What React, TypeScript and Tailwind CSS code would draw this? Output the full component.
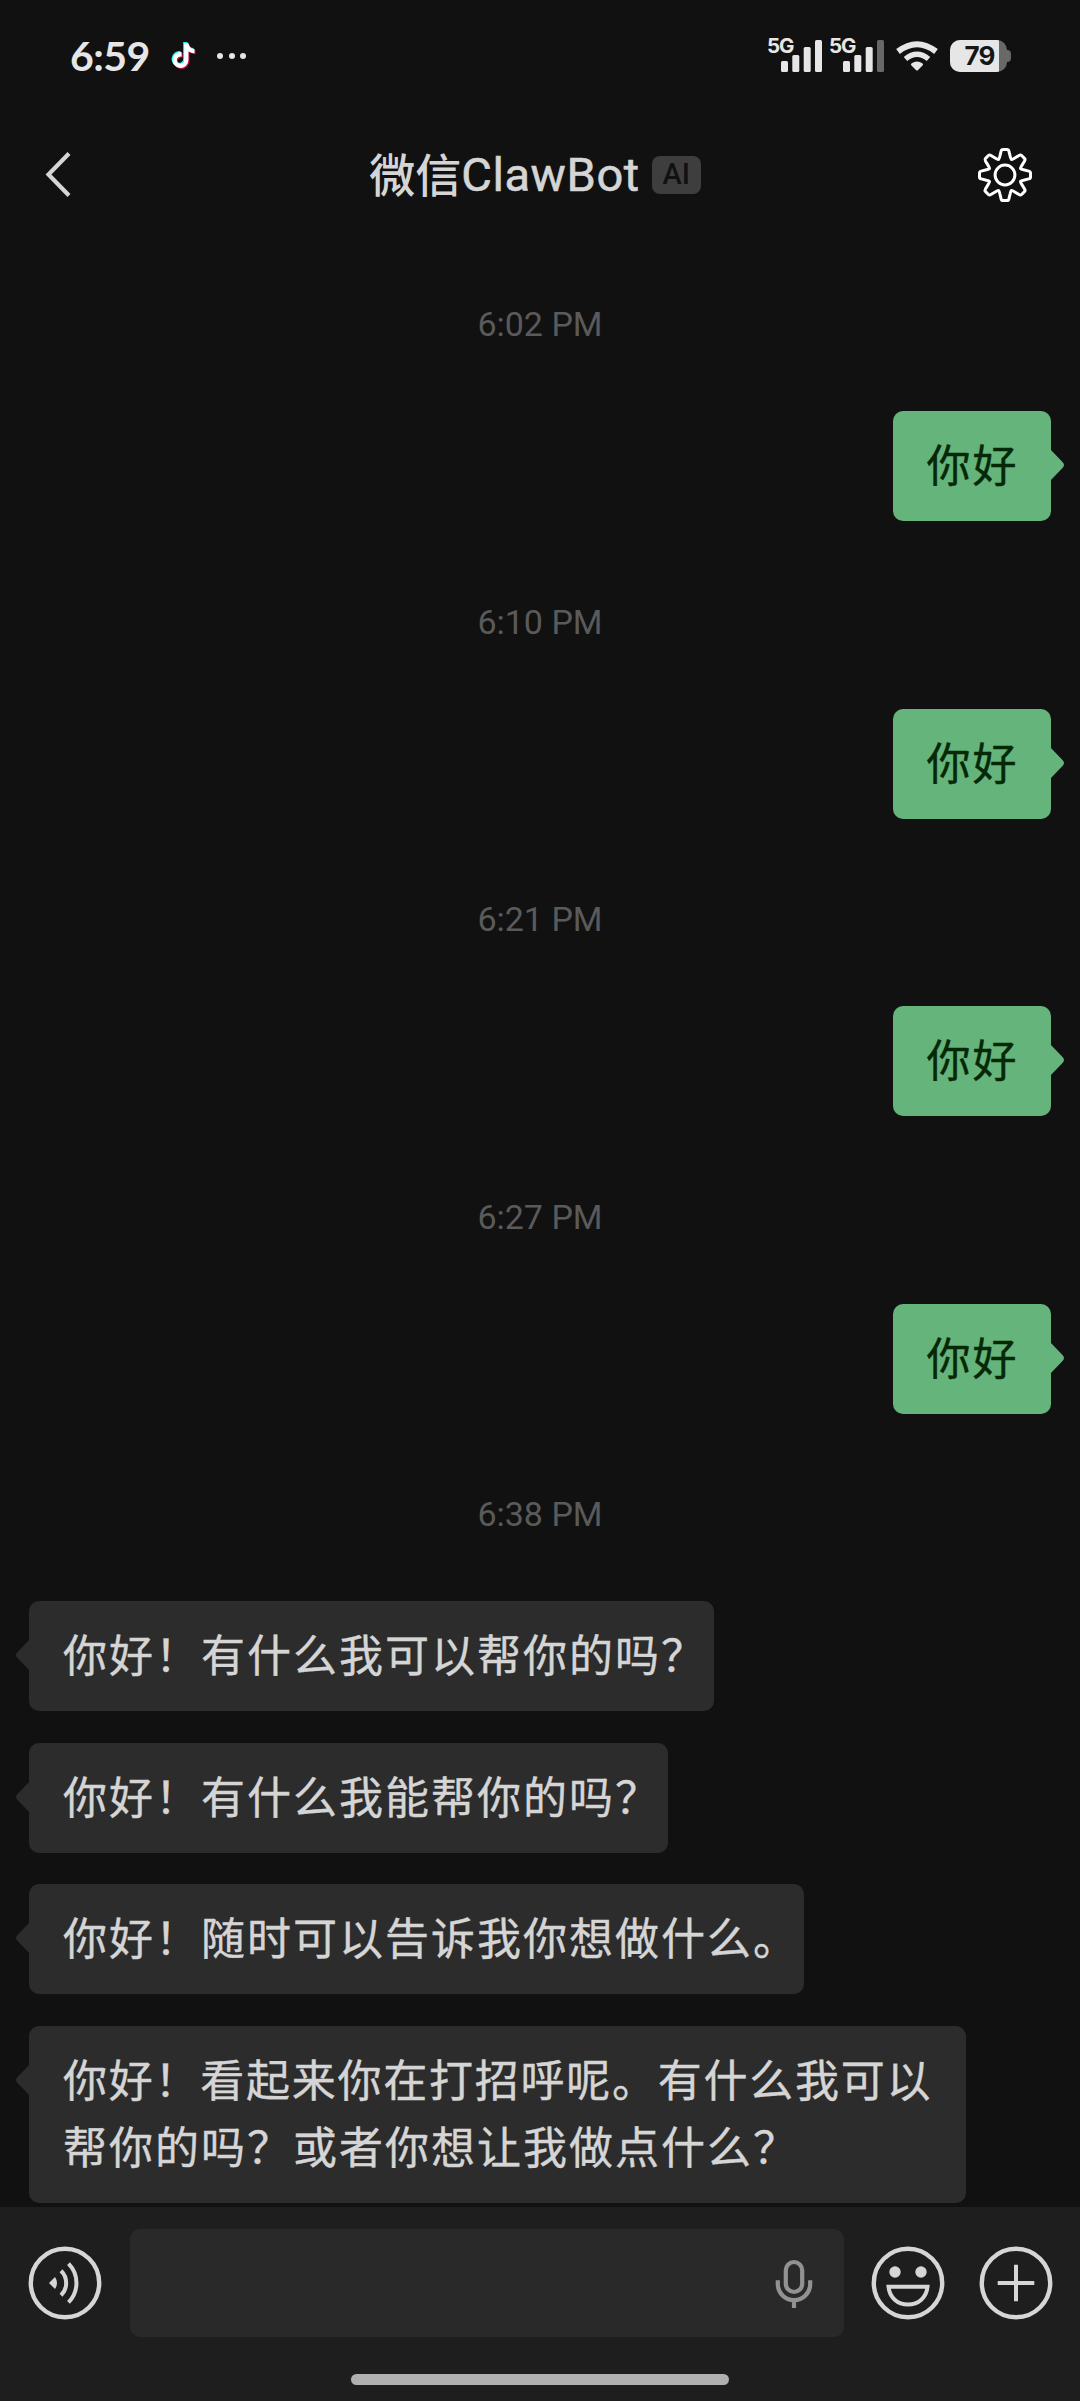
import { FC, ReactNode } from 'react';
import { FaTiktok } from 'react-icons/fa6';

const sentMessages = [
  { time: '6:02 PM', text: '你好' },
  { time: '6:10 PM', text: '你好' },
  { time: '6:21 PM', text: '你好' },
  { time: '6:27 PM', text: '你好' },
];

const replies = [
  { lines: ['你好！有什么我可以帮你的吗？'], width: 'w-[685px]' },
  { lines: ['你好！有什么我能帮你的吗？'], width: 'w-[639px]' },
  { lines: ['你好！随时可以告诉我你想做什么。'], width: 'w-[774.5px]' },
  {
    lines: ['你好！看起来你在打招呼呢。有什么我可以', '帮你的吗？或者你想让我做点什么？'],
    width: 'w-[936.5px] first-line:tracking-[1.75px]',
  },
];

const gearAngles = [0, 45, 90, 135, 180, 225, 270, 315];

const Signal: FC<{ weak?: boolean }> = ({ weak }) => (
  <div className="relative h-9 w-[55px]">
    <span className="absolute -top-[5px] left-0 font-['Inter'] text-[20.5px] leading-[26px] font-bold tracking-[-1px]">
      5G
    </span>
    <svg className="absolute inset-0" width="55" height="36" fill="#e6e6e6">
      <rect x="14" y="23" width="7" height="11" rx="1.5" />
      <rect x="25.3" y="17" width="7" height="17" rx="1.5" />
      <rect x="36.7" y="9" width="7" height="25" rx="1.5" />
      <rect x="48" y="2" width="7" height="32" rx="1.5" fill={weak ? '#686868' : '#e6e6e6'} />
    </svg>
  </div>
);

const StatusBar: FC = () => (
  <div className="flex h-[111px] items-center justify-between pr-[69px] pl-[70px] text-[#e6e6e6]">
    <div className="flex items-center">
      <span className="w-[80px] font-['Lato'] text-[41px] leading-none font-bold tracking-[-0.5px] whitespace-nowrap">
        6:59
      </span>
      <div className="relative ml-[21px] h-[25px] w-[24px]">
        <FaTiktok className="absolute -top-px -left-px text-[#25f4ee]" size={25} />
        <FaTiktok className="absolute top-px left-px text-[#c3144a]" size={25} />
        <FaTiktok className="absolute top-0 left-0 text-white" size={25} />
      </div>
      <div className="ml-[22px] flex gap-[5.5px]">
        <i className="size-1.5 rounded-full bg-[#e6e6e6]" />
        <i className="size-1.5 rounded-full bg-[#e6e6e6]" />
        <i className="size-1.5 rounded-full bg-[#e6e6e6]" />
      </div>
    </div>

    <div className="flex items-center">
      <Signal />
      <div className="ml-[7px]">
        <Signal weak />
      </div>
      <svg className="ml-[11px]" width="44" height="36" fill="none" stroke="#e6e6e6">
        <path d="M3 13.5Q22 -1 41 13.5" strokeWidth="6" />
        <path d="M10.5 21Q22 11.5 33.5 21" strokeWidth="5.5" />
        <path
          d="M17.5 26.5Q22 23.5 26.5 26.5L22 31Z"
          fill="#e6e6e6"
          strokeWidth="3"
          strokeLinejoin="round"
        />
      </svg>
      <div className="ml-[11px] flex items-center">
        <div className="flex h-8 w-[57px] overflow-hidden rounded-[10px] bg-[#686868]">
          <span className="flex w-[49px] items-center justify-center bg-[#e6e6e6] pl-[10px] font-['Inter'] text-[26px] font-bold tracking-[-1px] text-[#151515]">
            79
          </span>
        </div>
        <i className="h-3 w-[4px] rounded-r bg-[#686868]" />
      </div>
    </div>
  </div>
);

const Header: FC = () => (
  <header className="flex h-[127px] items-center justify-between pr-[45px] pl-[45px]">
    <svg width="56" height="60" fill="none" stroke="#d5d5d5" strokeWidth="4.2">
      <path d="M24 8.5L3.5 29.5L24 50.5" />
    </svg>
    <div className="flex items-center pr-[6px]">
      <h1 className="flex items-center text-[47px] leading-[60px] font-medium whitespace-nowrap text-[#d5d5d5]">
        <span className="pb-[5px] font-['Noto_Sans_CJK_SC',sans-serif] text-[46px]">微信</span>
        <span className="font-['Roboto'] font-normal tracking-[0.6px] [-webkit-text-stroke:0.6px]">
          ClawBot
        </span>
      </h1>
      <span className="ml-3 flex h-[38px] w-[49px] items-center justify-center rounded-lg bg-[#3e3e3e] font-['Roboto'] text-[29px] font-medium text-[#111]">
        AI
      </span>
    </div>
    <svg width="60" height="60" viewBox="-30 -30 60 60" fill="none" stroke="#fff" strokeWidth="3">
      {gearAngles.map((angle) => (
        <path
          key={angle}
          transform={`rotate(${angle})`}
          strokeLinecap="round"
          d="M-6.5-15.7Q-5.7-16.1-5.2-18.5L-3.9-23.8Q-3.5-25.5-2-25.5H2Q3.5-25.5 3.9-23.8L5.2-18.5Q5.7-16.1 6.5-15.7"
        />
      ))}
      <circle r="9.9" />
    </svg>
  </header>
);

const TimeLabel: FC<{ children: ReactNode }> = ({ children }) => (
  <time className="flex h-[187.5px] items-center justify-center pt-[15px] font-['Roboto'] text-[34px] text-[#5a5a5a]">
    {children}
  </time>
);

const RoundIcon: FC<{ children: ReactNode }> = ({ children }) => (
  <svg width="74" height="74" viewBox="-37 -37 74 74" fill="none" stroke="#d6d6d6" strokeWidth="4">
    <circle r="34.2" strokeWidth="4.4" />
    {children}
  </svg>
);

const InputBar: FC = () => (
  <footer className="flex h-[194px] flex-col items-center bg-[#1e1e1e] pt-[22px]">
    <div className="flex h-[108px] w-full items-center pr-[27.5px] pl-[27.5px]">
      <RoundIcon>
        <path d="M-16 0L-10-6Q-6 0-10 6Z" fill="#d6d6d6" stroke="none" />
        <path d="M-4-12.3A17.2 17.2 0 0 1-4 12.3" />
        <path d="M3.5-19.3A27.4 27.4 0 0 1 3.5 19.3" />
      </RoundIcon>
      <div className="ml-7 flex h-[108px] w-[714px] items-center justify-end rounded-[10px] bg-[#292929] pr-[30px]">
        <svg
          width="40"
          height="56"
          viewBox="-20 -28 40 56"
          fill="none"
          stroke="#929292"
          strokeWidth="4.2"
        >
          <rect x="-8.2" y="-21" width="16.4" height="30" rx="8.2" />
          <path d="M-16.2-2.7V1A16.2 16.2 0 0 0 16.2 1V-2.7M0 17V25" />
        </svg>
      </div>
      <div className="ml-[27px] flex gap-[34px]">
        <RoundIcon>
          <circle cx="-13" cy="-11" r="5.7" fill="#d6d6d6" stroke="none" />
          <circle cx="13" cy="-11" r="5.7" fill="#d6d6d6" stroke="none" />
          <path d="M-19.5 3.8H19.5C18.5 14.5 10.5 21.5 0 21.5S-18.5 14.5-19.5 3.8Z" />
        </RoundIcon>
        <RoundIcon>
          <path d="M-18.3 0H18.3M0-18.3V18.3" />
        </RoundIcon>
      </div>
    </div>
    <i className="mt-[37px] h-[11px] w-[378px] rounded-full bg-[#b0b0b0]" />
  </footer>
);

const App: FC = () => {
  return (
    <div className="flex h-[2401px] w-[1080px] flex-col overflow-hidden bg-[#111]">
      <StatusBar />
      <Header />

      <main className="-mt-[14.5px] flex flex-1 flex-col font-['Noto_Sans_CJK_SC',sans-serif] text-[44px] leading-[67.5px]">
        {sentMessages.map((message) => (
          <div key={message.time} className="flex flex-col">
            <TimeLabel>{message.time}</TimeLabel>
            <div className="relative mr-[29px] h-[110px] w-[158px] self-end rounded-[10px] bg-[#64b47c] px-[33.5px] py-[19px] tracking-[2px] whitespace-nowrap text-[#062806] [-webkit-text-stroke:0.4px]">
              {message.text}
              <svg className="absolute top-[38px] left-[157px]" width="15" height="34" fill="#64b47c">
                <path d="M0 0L12.5 13Q15.5 16 12.5 19L0 32Z" />
              </svg>
            </div>
          </div>
        ))}

        <TimeLabel>6:38 PM</TimeLabel>

        <div className="flex flex-col gap-[31.5px] pl-[29px] tracking-[2px]">
          {replies.map((reply) => (
            <div
              key={reply.lines[0]}
              className={`relative rounded-[10px] bg-[#2c2c2c] pt-[19px] pb-[23.5px] pl-[34px] whitespace-nowrap text-[#d5d5d5] [-webkit-text-stroke:0.4px] ${reply.width}`}
            >
              {reply.lines.map((line) => (
                <p key={line}>{line}</p>
              ))}
              <svg className="absolute top-[38px] -left-[14px]" width="15" height="34" fill="#2c2c2c">
                <path d="M15 0L2.5 13Q-0.5 16 2.5 19L15 32Z" />
              </svg>
            </div>
          ))}
        </div>
      </main>

      <InputBar />
    </div>
  );
};

export default App;
